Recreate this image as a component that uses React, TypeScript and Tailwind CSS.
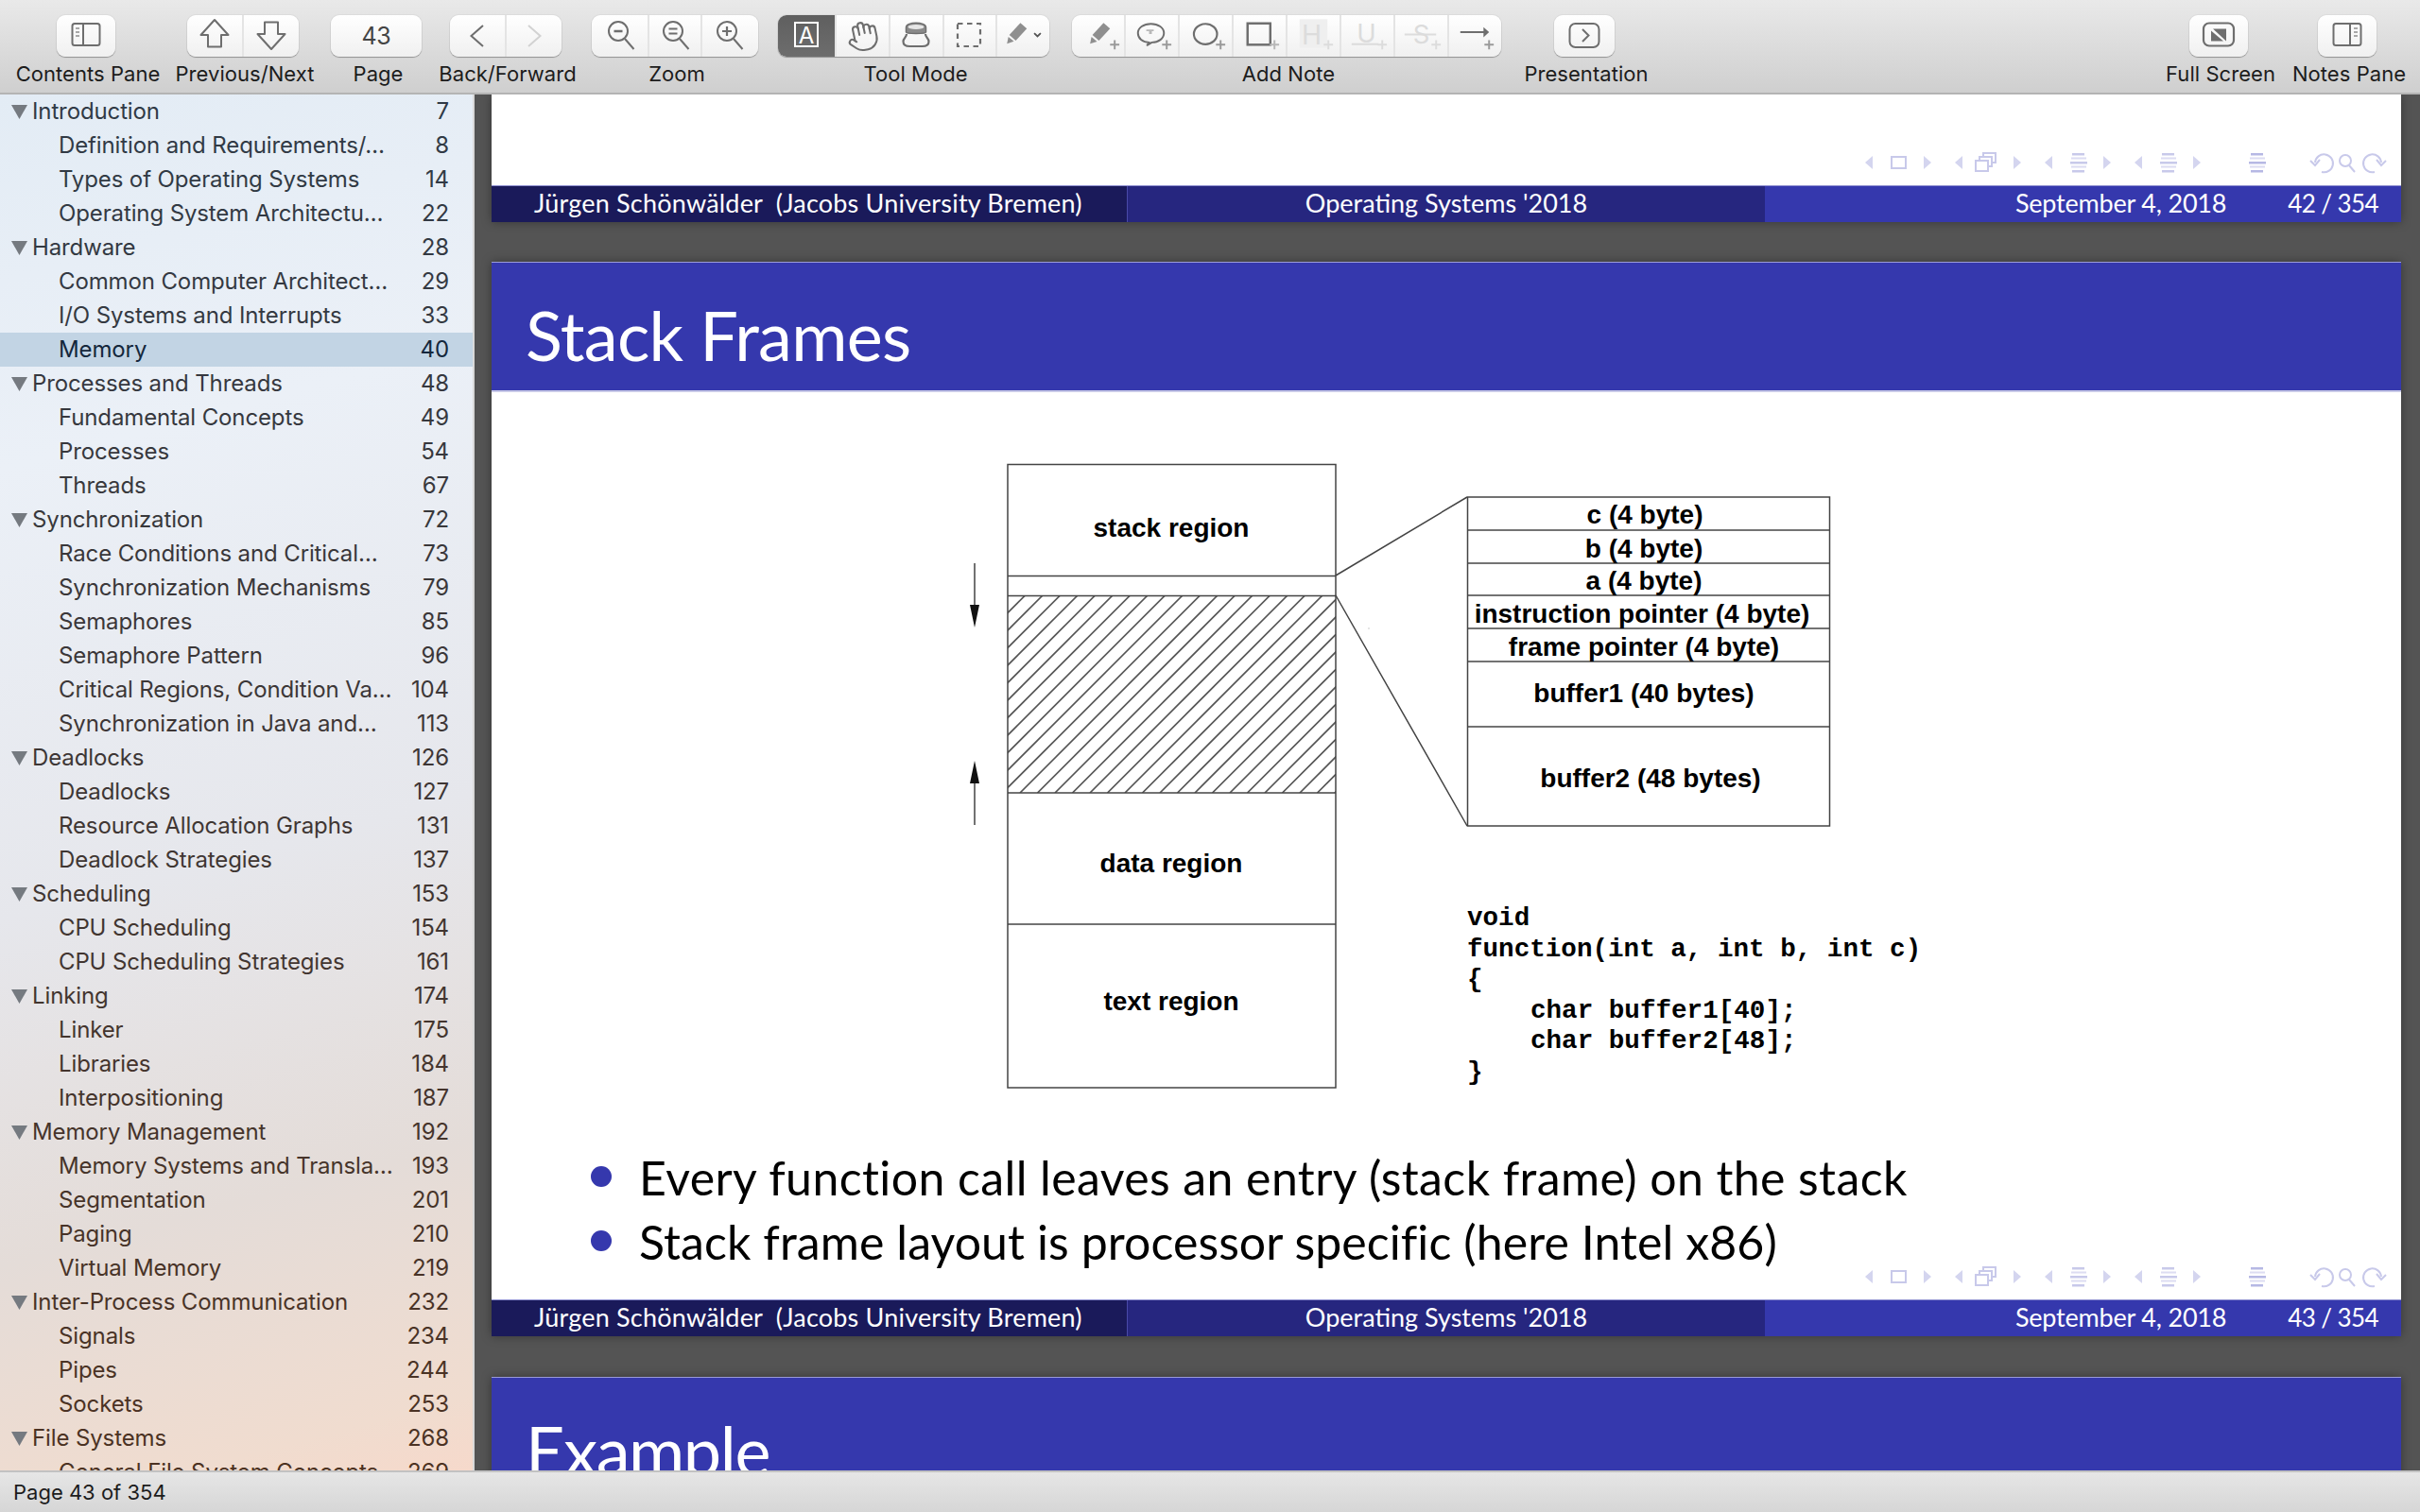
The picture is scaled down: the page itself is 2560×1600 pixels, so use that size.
import React from "react";
import { Hand } from "lucide-react";

const ICON = "#6e6e6e";
const FAINT = "#dcdcdc";

const toc: [number, string, number][] = [
  [0, "Introduction", 7], [1, "Definition and Requirements/…", 8], [1, "Types of Operating Systems", 14], [1, "Operating System Architectu…", 22],
  [0, "Hardware", 28], [1, "Common Computer Architect…", 29], [1, "I/O Systems and Interrupts", 33], [1, "Memory", 40],
  [0, "Processes and Threads", 48], [1, "Fundamental Concepts", 49], [1, "Processes", 54], [1, "Threads", 67],
  [0, "Synchronization", 72], [1, "Race Conditions and Critical…", 73], [1, "Synchronization Mechanisms", 79], [1, "Semaphores", 85], [1, "Semaphore Pattern", 96], [1, "Critical Regions, Condition Va…", 104], [1, "Synchronization in Java and…", 113],
  [0, "Deadlocks", 126], [1, "Deadlocks", 127], [1, "Resource Allocation Graphs", 131], [1, "Deadlock Strategies", 137],
  [0, "Scheduling", 153], [1, "CPU Scheduling", 154], [1, "CPU Scheduling Strategies", 161],
  [0, "Linking", 174], [1, "Linker", 175], [1, "Libraries", 184], [1, "Interpositioning", 187],
  [0, "Memory Management", 192], [1, "Memory Systems and Transla…", 193], [1, "Segmentation", 201], [1, "Paging", 210], [1, "Virtual Memory", 219],
  [0, "Inter-Process Communication", 232], [1, "Signals", 234], [1, "Pipes", 244], [1, "Sockets", 253],
  [0, "File Systems", 268], [1, "General File System Concepts", 269],
];

function rowColor(i: number) {
  const t = i / 40;
  const mix = (a: number, b: number) => Math.round(a + (b - a) * t);
  return `rgb(${mix(48, 76)},${mix(58, 50)},${mix(70, 34)})`;
}

function Seg({ children, className = "flex-1" }: { children?: React.ReactNode; className?: string }) {
  return <div className={`min-w-0 flex items-center justify-center border-l-2 border-[#e4e4e4] first:border-l-0 ${className}`}>{children}</div>;
}

function Group({ label, className, children }: { label: string; className: string; children: React.ReactNode }) {
  return (
    <div className={`flex flex-col items-center shrink-0 ${className}`}>
      <div className="flex w-full h-[44px] rounded-[9px] overflow-hidden bg-[linear-gradient(#ffffff,#f0f0f0)] shadow-[0_1px_1px_rgba(0,0,0,0.3),0_0_0_1px_rgba(0,0,0,0.04)]">{children}</div>
      <div className="mt-[6px] h-[24px] leading-[24px] text-[22px] text-[#1c1c1c] whitespace-nowrap tracking-[0.05px] translate-x-[2px]">{label}</div>
    </div>
  );
}

function Ic({ children, w = 44 }: { children: React.ReactNode; w?: number }) {
  return <svg width={w} height={44} viewBox={`0 0 ${w} 44`} fill="none" className="block">{children}</svg>;
}

function Plus({ x, c = "#9a9a9a" }: { x: number; c?: string }) {
  return <path d={`M${x - 5} 31.5h10M${x} 26.5v10`} stroke={c} strokeWidth="2" />;
}

function Pencil({ dx = 0 }: { dx?: number }) {
  return (
    <g transform={`translate(${dx} 0)`} fill="#8f8f8f">
      <path d="M32 8l7 6-12 13-7-6z" />
      <path d="M19 23l6 5-7.5 2.5z" />
    </g>
  );
}

function Magnifier({ sym }: { sym: "-" | "=" | "+" }) {
  return (
    <Ic>
      <circle cx="20" cy="17" r="10" stroke={ICON} strokeWidth="2" />
      <path d="M27 25l9.5 11" stroke={ICON} strokeWidth="2" />
      {sym === "-" && <path d="M15.5 17h9" stroke={ICON} strokeWidth="2.5" />}
      {sym === "=" && <path d="M15.5 14.5h9M15.5 19.5h9" stroke={ICON} strokeWidth="2.2" />}
      {sym === "+" && <path d="M15 17h10M20 12v10" stroke={ICON} strokeWidth="2.2" />}
    </Ic>
  );
}

function Toolbar() {
  return (
    <header className="h-[100px] shrink-0 flex items-start pt-[16px] border-b-2 border-[#b4b4b4] bg-[linear-gradient(#e9e9e9,#cfcfcf)]">
      <Group label="Contents Pane" className="w-[62px] ml-[60px]">
        <Seg>
          <Ic>
            <rect x="7.5" y="9" width="29" height="23" rx="2.5" stroke={ICON} strokeWidth="2" />
            <path d="M19 9v23" stroke={ICON} strokeWidth="2" />
            <path d="M11 14h4M11 18h4M11 22h4" stroke="#a8a8a8" strokeWidth="2" />
          </Ic>
        </Seg>
      </Group>
      <Group label="Previous/Next" className="w-[118px] ml-[76px]">
        <Seg>
          <Ic>
            <path d="M22 5L7.5 21H15V33.5H29V21H36.5Z" stroke={ICON} strokeWidth="2" strokeLinejoin="round" />
          </Ic>
        </Seg>
        <Seg>
          <Ic>
            <path d="M22 36L7.5 20H15V7.5H29V20H36.5Z" stroke={ICON} strokeWidth="2" strokeLinejoin="round" />
          </Ic>
        </Seg>
      </Group>
      <Group label="Page" className="w-[96px] ml-[34px]">
        <Seg>
          <span className="text-[25px] text-[#444444] tracking-[-0.3px] translate-y-[1px]">43</span>
        </Seg>
      </Group>
      <Group label="Back/Forward" className="w-[118px] ml-[30px]">
        <Seg>
          <Ic><path d="M28 11L15.5 22 28 33" stroke={ICON} strokeWidth="2" /></Ic>
        </Seg>
        <Seg>
          <Ic><path d="M16 11l12.5 11L16 33" stroke="#d2d2d2" strokeWidth="2" /></Ic>
        </Seg>
      </Group>
      <Group label="Zoom" className="w-[176px] ml-[32px]">
        <Seg className="flex-none w-[59px]"><Magnifier sym="-" /></Seg>
        <Seg className="flex-none w-[56px]"><Magnifier sym="=" /></Seg>
        <Seg className="flex-1 pr-[4px]"><Magnifier sym="+" /></Seg>
      </Group>
      <Group label="Tool Mode" className="w-[287px] ml-[21px]">
        <Seg className="flex-[1.1] bg-[linear-gradient(#5f5f5f,#6d6d6d)]">
          <Ic>
            <rect x="10" y="8" width="24" height="25" stroke="#ffffff" strokeWidth="2" />
            <text x="22" y="29.5" textAnchor="middle" fontSize="24" fill="#ffffff" fontFamily="Inter, sans-serif">A</text>
          </Ic>
        </Seg>
        <Seg>
          <Hand size={35} strokeWidth={1.4} color={ICON} className="rotate-[-12deg]" />
        </Seg>
        <Seg>
          <Ic>
            <path d="M11.5 13c0-6.500 21-6.500 21 0v5c0 2-21 2-21 0z" fill="#8a8a8a" stroke={ICON} strokeWidth="1.500" />
            <ellipse cx="22" cy="12.500" rx="8.500" ry="2.500" fill="#e6e6e6" />
            <path d="M12 20c0 4-3.500 4-3.500 8 0 4 3 5 7 5h13c4 0 7-1 7-5 0-4-3.500-4-3.500-8" stroke={ICON} strokeWidth="2.200" />
          </Ic>
        </Seg>
        <Seg>
          <Ic>
            <rect x="9" y="9" width="24" height="24" stroke={ICON} strokeWidth="2.2" strokeDasharray="5.5 4.5" />
          </Ic>
        </Seg>
        <Seg>
          <Ic w={56}>
            <Pencil dx={-7} />
            <path d="M40 19l3.5 3.5L47 19" stroke="#555555" strokeWidth="1.8" />
          </Ic>
        </Seg>
      </Group>
      <Group label="Add Note" className="w-[454px] ml-[24px]">
        <Seg>
          <Ic w={56}><Pencil dx={2} /><Plus x={46} /></Ic>
        </Seg>
        <Seg>
          <Ic w={56}>
            <path d="M25 29c-7 0-12-4.200-12-10s6-10 14-10 14 4.200 14 10-6 10-13 10l-5 3z" stroke={ICON} strokeWidth="2" strokeLinejoin="round" />
            <path d="M22 15h8v2h-2v3h-3v-3h-3z" fill="#b8b8b8" />
            <Plus x={44} />
          </Ic>
        </Seg>
        <Seg>
          <Ic w={56}>
            <ellipse cx="27.700" cy="20" rx="12.500" ry="11" stroke={ICON} strokeWidth="2.200" />
            <Plus x={44} />
          </Ic>
        </Seg>
        <Seg>
          <Ic w={56}>
            <rect x="15" y="8.500" width="24.500" height="23" stroke={ICON} strokeWidth="2.500" />
            <Plus x={44} c="#b8b8b8" />
          </Ic>
        </Seg>
        <Seg>
          <Ic w={56}>
            <rect x="13" y="4" width="30" height="31" fill="#efefef" />
            <text x="26" y="31" textAnchor="middle" fontSize="29" fill={FAINT} fontFamily="Inter, sans-serif">H</text>
            <Plus x={44} c={FAINT} />
          </Ic>
        </Seg>
        <Seg>
          <Ic w={56}>
            <text x="27" y="29" textAnchor="middle" fontSize="28" fill={FAINT} fontFamily="Inter, sans-serif">U</text>
            <path d="M11 31h29" stroke={FAINT} strokeWidth="2" />
            <Plus x={44} c={FAINT} />
          </Ic>
        </Seg>
        <Seg>
          <Ic w={56}>
            <text x="28" y="30" textAnchor="middle" fontSize="28" fill={FAINT} fontFamily="Inter, sans-serif">S</text>
            <path d="M10 20.500h34" stroke={FAINT} strokeWidth="2" />
            <Plus x={44} c={FAINT} />
          </Ic>
        </Seg>
        <Seg>
          <Ic w={56}>
            <path d="M12 18h27" stroke={ICON} strokeWidth="2" />
            <path d="M37 12.500l6 5.500-6 5.500z" fill={ICON} />
            <Plus x={43} />
          </Ic>
        </Seg>
      </Group>
      <Group label="Presentation" className="w-[64px] ml-[56px]">
        <Seg>
          <Ic>
            <rect x="6.500" y="9" width="31" height="25" rx="6" stroke={ICON} strokeWidth="2" />
            <path d="M20 15l6.500 6.500L20 28" stroke={ICON} strokeWidth="2" />
          </Ic>
        </Seg>
      </Group>
      <div className="flex-1" />
      <Group label="Full Screen" className="w-[62px]">
        <Seg>
          <Ic>
            <rect x="6" y="8.500" width="32" height="24" rx="6" stroke={ICON} strokeWidth="2.200" />
            <path d="M16 14.500h14v13z" fill={ICON} />
            <path d="M14 16.500v11h13z" fill={ICON} />
          </Ic>
        </Seg>
      </Group>
      <Group label="Notes Pane" className="w-[62px] ml-[74px] mr-[46px]">
        <Seg>
          <Ic>
            <rect x="7.500" y="9" width="29" height="23" rx="2.500" stroke={ICON} strokeWidth="2" />
            <path d="M25 9v23" stroke={ICON} strokeWidth="2" />
            <path d="M29 14h4M29 18h4M29 22h4" stroke="#a8a8a8" strokeWidth="2" />
          </Ic>
        </Seg>
      </Group>
    </header>
  );
}

function Sidebar() {
  return (
    <aside className="w-[500px] shrink-0 overflow-hidden bg-[linear-gradient(165deg,#e3ecf5_0%,#ebf0f7_25%,#e6e7ec_55%,#e4dcd8_78%,#f0dccf_95%,#f6d9cb_100%)]">
      {toc.map(([lvl, title, page], i) => (
        <div
          key={i}
          className={`h-[36px] flex items-center pr-[25px] text-[24px] tracking-[-0.12px] whitespace-nowrap ${i === 7 ? "bg-[#c2d4e4]" : ""}`}
          style={{ color: i === 7 ? "#14273c" : rowColor(i) }}
        >
          {lvl === 0 ? (
            <svg width="17" height="15" viewBox="0 0 17 15" className="ml-[12px] mr-[5px] shrink-0" fill="#757a80"><path d="M0 0h17L8.500 15z" /></svg>
          ) : (
            <span className="w-[62px] shrink-0" />
          )}
          <span className="flex-1 min-w-0">{title}</span>
          <span>{page}</span>
        </div>
      ))}
    </aside>
  );
}

function LinesIcon({ x, y, strong = false }: { x: number; y: number; strong?: boolean }) {
  return (
    <g fill={strong ? "#b6b8e4" : "#c8c9ea"}>
      <rect x={x + 2} y={y - 10} width="13" height="2.500" />
      <rect x={x + 1} y={y - 5.500} width="16" height="2" fill="#dcdcf2" />
      <rect x={x} y={y - 1} width="18" height="2.500" />
      <rect x={x + 1} y={y + 3.500} width="16" height="2" fill="#dcdcf2" />
      <rect x={x + 2} y={y + 8} width="13" height="2.500" />
    </g>
  );
}

function Tri({ x, dir }: { x: number; dir: 1 | -1 }) {
  return <path d={`M${x - 4 * dir} 165L${x + 4 * dir} 172L${x - 4 * dir} 179Z`} fill="#d4d5ef" />;
}

function NavIcons() {
  return (
    <svg width="580" height="40" viewBox="1960 152 580 40" fill="none" className="absolute right-0 bottom-[4px]">
      <Tri x={1977} dir={-1} />
      <rect x="2001" y="166" width="15" height="12" stroke="#c8c9ea" strokeWidth="2" />
      <Tri x={2039} dir={1} />
      <Tri x={2072} dir={-1} />
      <g stroke="#c8c9ea" strokeWidth="2">
        <rect x="2090" y="170" width="13" height="11" fill="#ffffff" />
        <path d="M2094 170v-4h13v10h-4M2098 166v-4h13v10h-4" />
      </g>
      <Tri x={2134} dir={1} />
      <Tri x={2167} dir={-1} />
      <LinesIcon x={2190} y={172} />
      <Tri x={2229} dir={1} />
      <Tri x={2262} dir={-1} />
      <LinesIcon x={2285} y={172} />
      <Tri x={2324} dir={1} />
      <LinesIcon x={2379} y={172} strong />
      <g stroke="#c8c9ea" strokeWidth="2">
        <path d="M2449 172a9.500 9.500 0 1 1 7 10" />
        <path d="M2444 170l5 5 5-6" />
        <circle cx="2481" cy="170" r="6" />
        <path d="M2485 175l6 7" />
        <path d="M2519 172a9.500 9.500 0 1 0 -7 10" />
        <path d="M2524 170l-5 5-5-6" />
      </g>
    </svg>
  );
}

function Footer({ n }: { n: number }) {
  return (
    <div className="h-[39px] grid grid-cols-3 text-white text-[27px] leading-[36px] whitespace-nowrap border-t border-[#8f90d0]">
      <div className="bg-[#1a1a5a] pl-[45px] border-r border-[#4a4aa8] tracking-[0.2px]">Jürgen Schönwälder&nbsp;&nbsp;(Jacobs University Bremen)</div>
      <div className="bg-[#26267f] text-center tracking-[0px]">Operating Systems '2018</div>
      <div className="bg-[#3538ad] flex justify-end pr-[24px]">
        <span className="tracking-[-0.2px]">September 4, 2018</span>
        <span className="ml-[65px] text-[26px] tracking-[-0.6px]">{n} / 354</span>
      </div>
    </div>
  );
}

const labelProps = { fontFamily: "'Liberation Sans', sans-serif", fontWeight: 700, fontSize: 28, textAnchor: "middle" as const, fill: "#000000" };

function Diagram() {
  const hatch: number[] = [];
  for (let c = 1696; c < 2262; c += 18.5) hatch.push(c);
  const rights = [526, 561, 596, 630, 665, 700, 769, 874];
  const labels: [string, number, number][] = [
    ["c (4 byte)", 1740, 554], ["b (4 byte)", 1739, 590], ["a (4 byte)", 1739, 624],
    ["instruction pointer (4 byte)", 1737, 659], ["frame pointer (4 byte)", 1739, 694],
    ["buffer1 (40 bytes)", 1739, 743], ["buffer2 (48 bytes)", 1746, 833],
  ];
  const code: [string, number, number][] = [
    ["void", 1552, 979], ["function(int a, int b, int c)", 1552, 1012], ["{", 1552, 1044],
    ["char buffer1[40];", 1619, 1077], ["char buffer2[48];", 1619, 1109], ["}", 1552, 1142],
  ];
  return (
    <svg width="1040" height="680" viewBox="1020 480 1040 680" fill="none" className="block ml-[500px]">
      <defs>
        <clipPath id="hatch"><rect x="1066" y="630" width="347" height="209" /></clipPath>
      </defs>
      <g clipPath="url(#hatch)" stroke="#555555" strokeWidth="1.700">
        {hatch.map((c) => <line key={c} x1={c - 630} y1="630" x2={c - 839} y2="839" />)}
      </g>
      <g stroke="#444444" strokeWidth="1.500">
        <rect x="1066" y="491.500" width="347" height="659.500" />
        <path d="M1066 609.500h347M1066 630.500h347M1066 839h347M1066 978h347" />
        <path d="M1413 609L1552 526M1413 630L1552 874" />
        <rect x="1552.500" y="526" width="383" height="348" />
        {rights.slice(1, -1).map((y) => <path key={y} d={`M1552 ${y}h383`} />)}
        <path d="M1031 596v50M1031 873v-50" />
      </g>
      <path d="M1026 640h10l-5 24zM1026 829h10l-5-24z" fill="#111111" />
      <rect x="1447.500" y="664.500" width="1" height="1" fill="#999999" />
      <text x="1239" y="568" {...labelProps}>stack region</text>
      <text x="1239" y="923" {...labelProps}>data region</text>
      <text x="1239" y="1069" {...labelProps}>text region</text>
      {labels.map(([t, x, y]) => <text key={t} x={x} y={y} {...labelProps}>{t}</text>)}
      {code.map(([t, x, y]) => (
        <text key={t} x={x} y={y} fontFamily="'Liberation Mono', monospace" fontWeight="700" fontSize="27.600" fill="#000000">{t}</text>
      ))}
    </svg>
  );
}

function Bullet({ text, className }: { text: string; className: string }) {
  return (
    <li className={`flex items-center whitespace-nowrap ${className}`}>
      <span className="w-[22px] h-[22px] rounded-full bg-[#3538ad] mr-[29px] -translate-y-[1px] shrink-0" />
      {text}
    </li>
  );
}

function Slides() {
  return (
    <main className="flex-1 min-w-0 border-l-2 border-[#d9d9d9] bg-[#545454] pl-[18px] pr-[20px] overflow-hidden" style={{ fontFamily: "Lato, sans-serif" }}>
      <section className="shadow-[0_0_10px_rgba(0,0,0,0.35)]">
        <div className="relative h-[96px] bg-white"><NavIcons /></div>
        <Footer n={42} />
      </section>
      <section className="mt-[42px] shadow-[0_0_10px_rgba(0,0,0,0.35)]">
        <div className="h-[138px] bg-[#3538ad] border-t border-[#9a9bd8] border-b-2 border-b-[#c9cae8] pl-[36px] pt-[34px] text-white text-[72px] leading-[84px] tracking-[-0.7px]">Stack Frames</div>
        <div className="relative h-[960px] bg-white pt-[65px]">
          <Diagram />
          <ul className="mt-[52px] pl-[105px] text-[50px] leading-[68px] text-black">
            <Bullet text="Every function call leaves an entry (stack frame) on the stack" className="tracking-[0.4px]" />
            <Bullet text="Stack frame layout is processor specific (here Intel x86)" className="tracking-[0.08px]" />
          </ul>
          <NavIcons />
        </div>
        <Footer n={43} />
      </section>
      <section className="mt-[43px] shadow-[0_0_10px_rgba(0,0,0,0.35)]">
        <div className="h-[136px] bg-[#3538ad] border-t border-[#9a9bd8] pl-[36px] pt-[34px] text-white text-[72px] leading-[84px] tracking-[-1.4px]">Example</div>
      </section>
    </main>
  );
}

export default function App() {
  return (
    <div className="w-[2560px] h-[1600px] flex flex-col overflow-hidden" style={{ fontFamily: "Inter, sans-serif" }}>
      <Toolbar />
      <div className="flex-1 min-h-0 flex">
        <Sidebar />
        <Slides />
      </div>
      <footer className="h-[44px] shrink-0 border-t-2 border-[#c2c2c2] bg-[linear-gradient(#e6e6e6,#d6d6d6)] pl-[14px] text-[22px] leading-[42px] text-[#1c1c1c] tracking-[0px]">Page 43 of 354</footer>
    </div>
  );
}
